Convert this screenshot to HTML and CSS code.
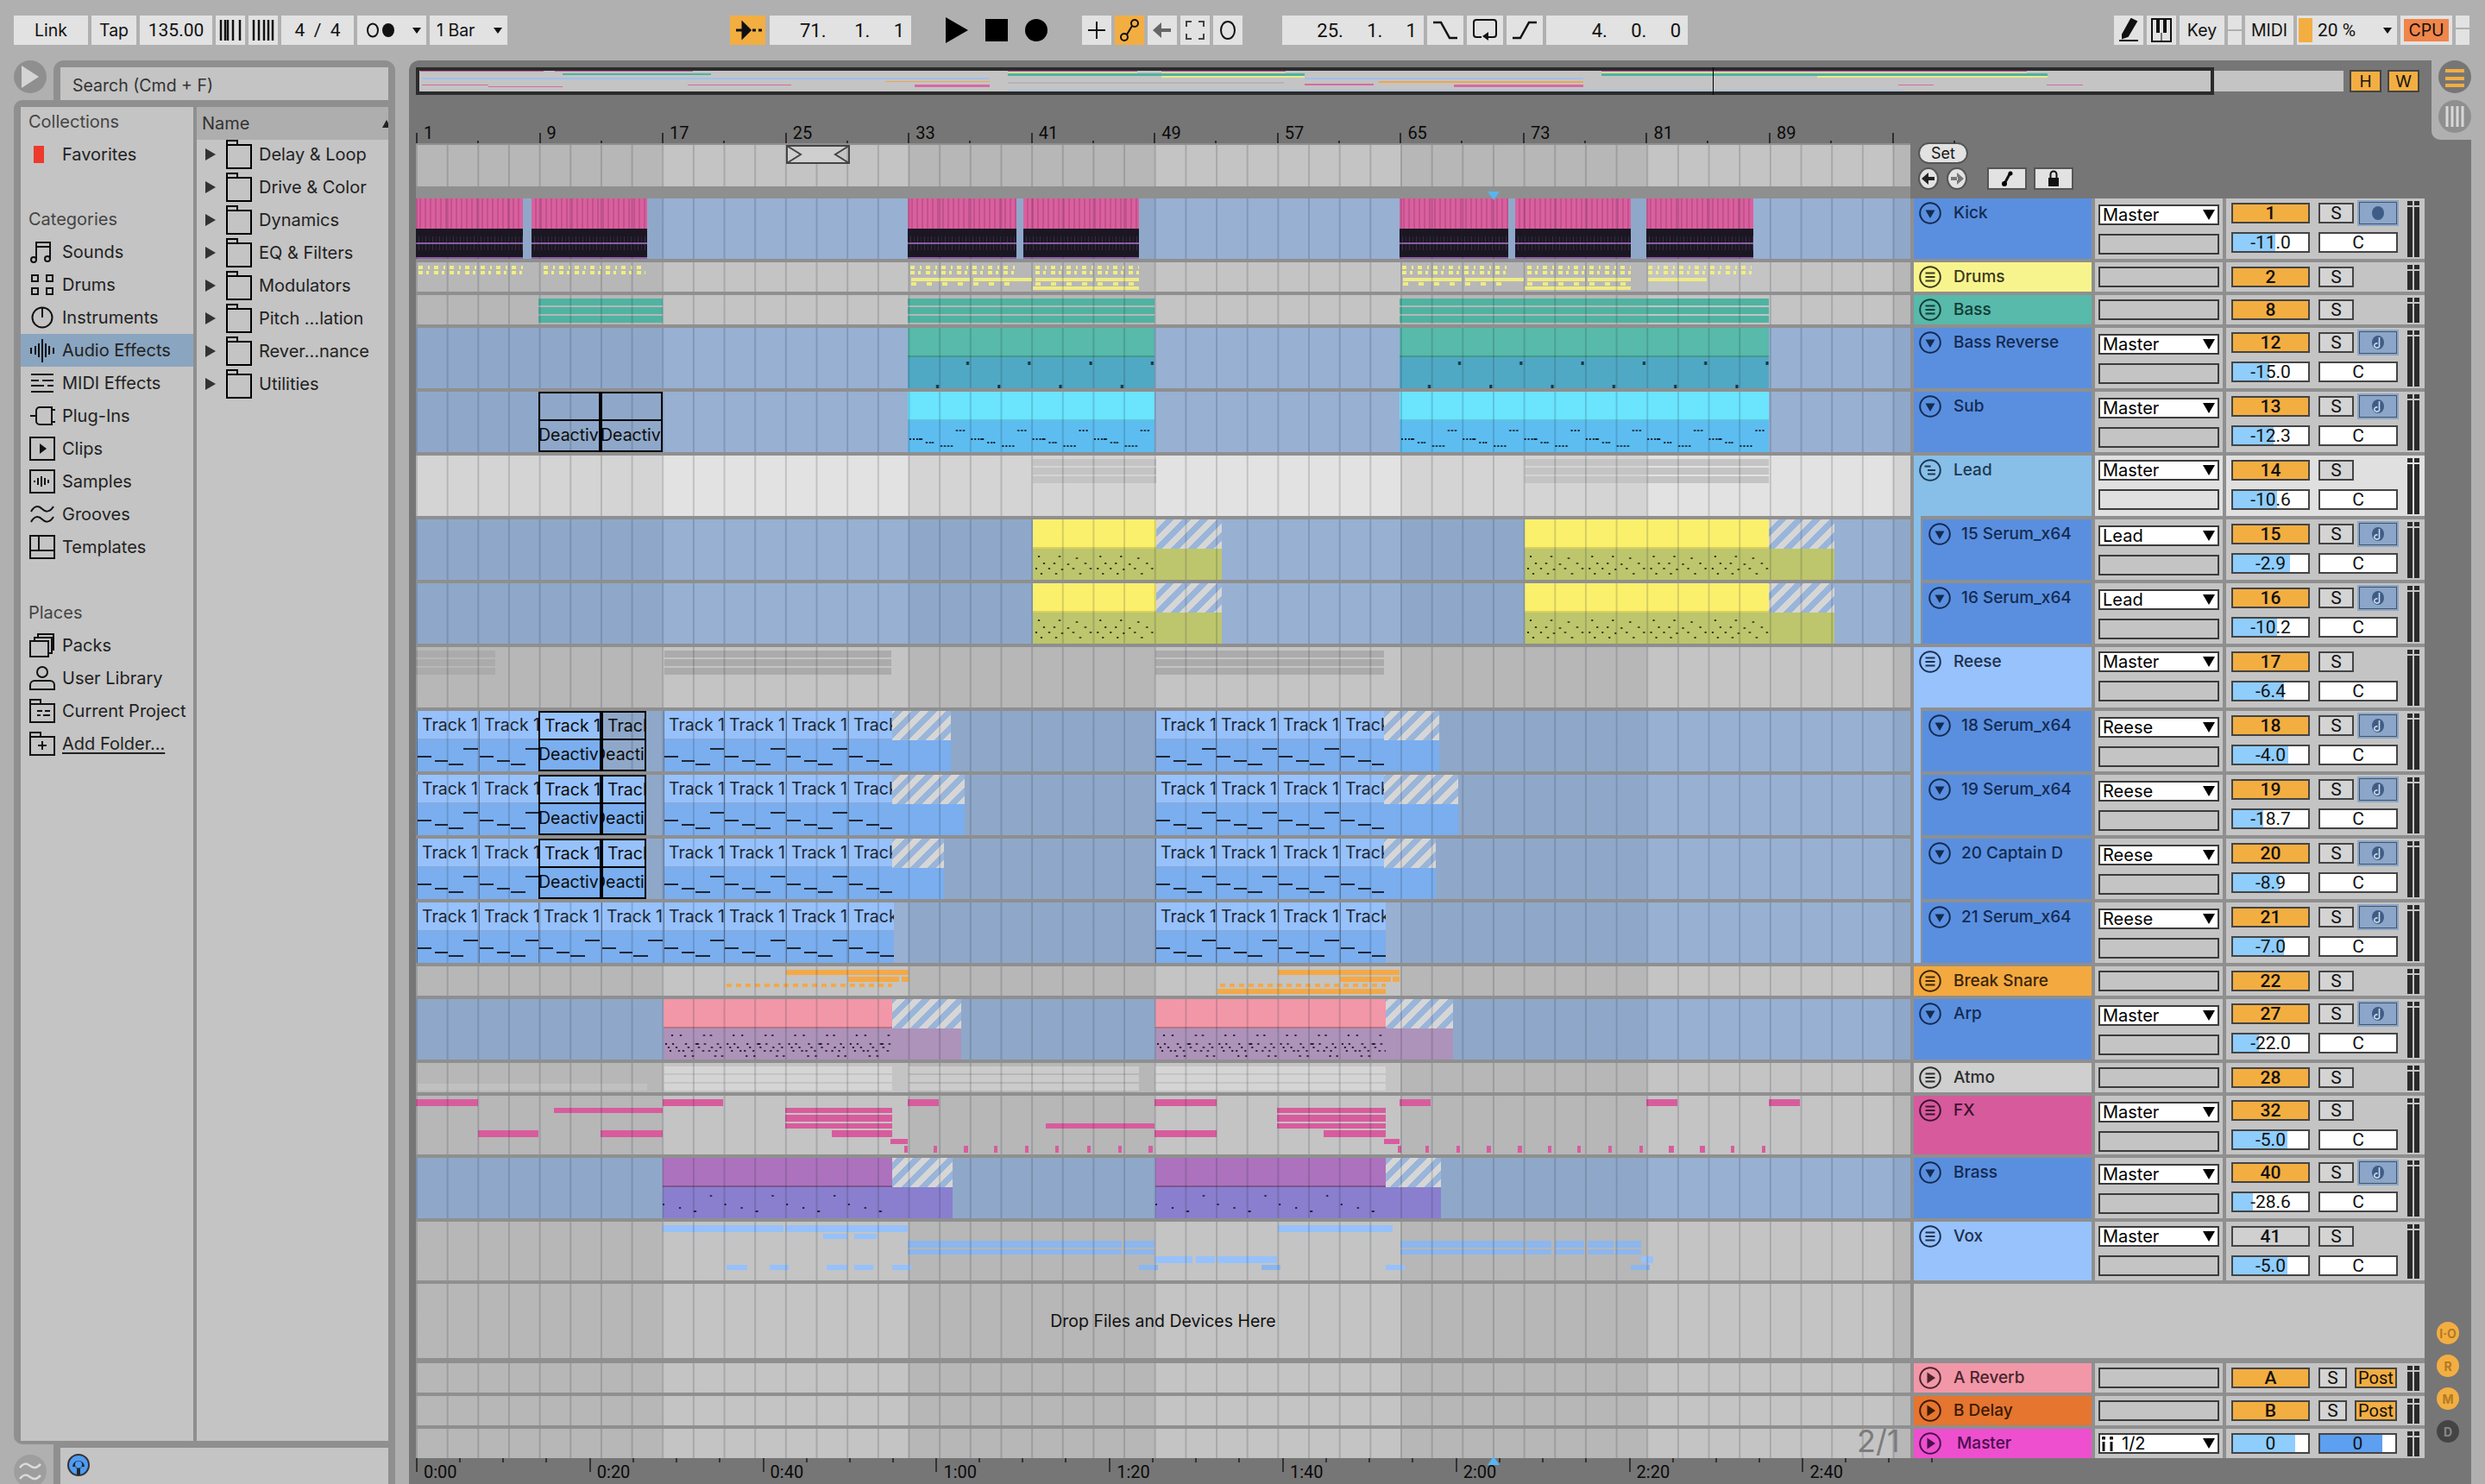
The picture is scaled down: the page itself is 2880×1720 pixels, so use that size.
FILE: index.html
```html
<!DOCTYPE html>
<html lang="en">
<head>
<meta charset="utf-8">
<title>Ableton Live – Arrangement</title>
<link rel="stylesheet" href="styles.css">
</head>
<body>
<svg class="defs" aria-hidden="true">
  <defs>
    <pattern id="p-arp" patternUnits="userSpaceOnUse" width="71.3" height="36">
      <path d="M9 7h2v2H9zM19 7h2v2h-2zM46 7h2v2h-2zM54 7h2v2h-2zM2 17h2v2H2zM10 17h2v2h-2zM25 17h2v2h-2zM37 17h4v2h-4zM47 17h2v2h-2zM62 17h2v2h-2zM5 21h2v2H5zM14 21h2v2h-2zM28 21h2v2h-2zM40 21h2v2h-2zM55 21h2v2h-2zM65 21h2v2h-2zM7 25h2v2H7zM17 25h2v2h-2zM22 25h2v2h-2zM32 25h2v2h-2zM45 25h2v2h-2zM52 25h2v2h-2zM60 25h2v2h-2zM24 31h2v2h-2zM33 31h2v2h-2zM59 31h2v2h-2zM67 31h2v2h-2z" fill="#1f1a28"/>
    </pattern>
    <pattern id="p-lead" patternUnits="userSpaceOnUse" width="71.3" height="36">
      <path d="M6 8h2v2H6zM30 8h2v2h-2zM50 10h2v2h-2zM12 16h2v2h-2zM24 16h2v2h-2zM40 17h2v2h-2zM60 16h2v2h-2zM3 22h2v2H3zM18 22h2v2h-2zM33 23h2v2h-2zM46 22h2v2h-2zM66 22h2v2h-2zM9 28h2v2H9zM26 28h2v2h-2zM54 28h2v2h-2z" fill="#2b2c1a"/>
    </pattern>
    <pattern id="p-brass" patternUnits="userSpaceOnUse" width="71.6" height="36">
      <path d="M55 9h2v2h-2zM0 19h2v2H0zM19 23h2v2h-2zM36 27h3v2h-3z" fill="#1c1a30"/>
    </pattern>
    <pattern id="p-sub" patternUnits="userSpaceOnUse" width="71.3" height="36">
      <path d="M56 10h2v2h-2zM60 10h2v2h-2zM64 10h2v2h-2zM2 20h2v2H2zM6 20h2v2H6zM10 20h2v2h-2zM13 20h4v2h-4zM21 24h2v2h-2zM25 24h2v2h-2zM28 24h2v2h-2zM38 28h2v2h-2zM42 28h2v2h-2zM46 28h2v2h-2zM50 28h2v2h-2z" fill="#10202e"/>
    </pattern>
    <pattern id="p-rev" patternUnits="userSpaceOnUse" width="71.3" height="36">
      <path d="M68 5h3v4h-3zM33 32h3v4h-3z" fill="#12303a"/>
    </pattern>
    <symbol id="t-down" viewBox="0 0 26 26"><circle cx="13" cy="13" r="11.8" fill="none" stroke="currentColor" stroke-width="2"/><path d="M7.5 9.5h11L13 19z" fill="currentColor"/></symbol>
    <symbol id="t-lines" viewBox="0 0 26 26"><circle cx="13" cy="13" r="11.8" fill="none" stroke="currentColor" stroke-width="2"/><path d="M7.5 8.5h11M7.5 13h11M7.5 17.5h11" fill="none" stroke="currentColor" stroke-width="2"/></symbol>
    <symbol id="t-stair" viewBox="0 0 26 26"><circle cx="13" cy="13" r="11.8" fill="none" stroke="currentColor" stroke-width="2"/><path d="M6.5 8.5h7M10 13h9M10 17.5h9" fill="none" stroke="currentColor" stroke-width="2"/></symbol>
    <symbol id="t-right" viewBox="0 0 26 26"><circle cx="13" cy="13" r="11.8" fill="none" stroke="currentColor" stroke-width="2"/><path d="M9.5 6.5 19 13l-9.5 6.5z" fill="currentColor"/></symbol>
    <symbol id="m-dot" viewBox="0 0 20 20"><ellipse cx="10" cy="10" rx="7" ry="8" fill="#3f5c86"/></symbol>
    <symbol id="m-note" viewBox="0 0 20 20"><ellipse cx="10" cy="10" rx="7" ry="8" fill="#3f5c86"/><path d="M11.500 4v8.500a3 2.600 0 1 1-2-1.500" fill="none" stroke="#cfdcee" stroke-width="1.600"/></symbol>
    <symbol id="b-sounds" viewBox="0 0 30 28"><path d="M8 23V3h16v19M8 8h16" fill="none" stroke="#111" stroke-width="2"/><circle cx="5" cy="23" r="3" fill="none" stroke="#111" stroke-width="2"/><circle cx="21" cy="22" r="3" fill="none" stroke="#111" stroke-width="2"/></symbol>
    <symbol id="b-drums" viewBox="0 0 30 28"><path d="M3 3h7v7H3zM20 3h7v7h-7zM3 18h7v7H3zM20 18h7v7h-7z" fill="none" stroke="#111" stroke-width="2"/></symbol>
    <symbol id="b-inst" viewBox="0 0 30 28"><circle cx="15" cy="14" r="11.500" fill="none" stroke="#111" stroke-width="2"/><path d="M15 2v12" stroke="#111" stroke-width="2"/></symbol>
    <symbol id="b-fx" viewBox="0 0 30 28"><path d="M2 11v7M7 9v10M11 6v16M15 1v27M19 6v16M23 9v10M28 11v7" stroke="#111" stroke-width="2"/></symbol>
    <symbol id="b-midi" viewBox="0 0 30 28"><path d="M2 4h26M2 24h26M2 11h9M15 11h13M2 17h15M21 17h7" stroke="#111" stroke-width="2" fill="none"/></symbol>
    <symbol id="b-plug" viewBox="0 0 30 28"><path d="M1 14h7M26 7h4M26 21h4M12 4h14v20H12a4 4 0 0 1-4-4V8a4 4 0 0 1 4-4z" stroke="#111" stroke-width="2" fill="none"/></symbol>
    <symbol id="b-clips" viewBox="0 0 30 28"><path d="M1 1h28v26H1z" stroke="#111" stroke-width="2" fill="none"/><path d="M12 8l8 6-8 6z" fill="#111"/></symbol>
    <symbol id="b-samples" viewBox="0 0 30 28"><path d="M1 1h28v26H1z" stroke="#111" stroke-width="2" fill="none"/><path d="M6 13v2M10 10v8M14 8v12M18 10v8M22 12v4" stroke="#111" stroke-width="2"/></symbol>
    <symbol id="b-grooves" viewBox="0 0 30 28"><path d="M2 11c5-9 10-6 13-3s8 5 13-3M2 23c5-9 10-6 13-3s8 5 13-3" stroke="#111" stroke-width="2" fill="none"/></symbol>
    <symbol id="b-tmpl" viewBox="0 0 30 28"><path d="M1 1h28v26H1zM1 18h28M11 1v17" stroke="#111" stroke-width="2" fill="none"/></symbol>
    <symbol id="b-packs" viewBox="0 0 30 28"><path d="M1 9h21v18H1zM6 9V5h20v18h-4M10 5V1h18v18h-2" stroke="#111" stroke-width="2" fill="none"/></symbol>
    <symbol id="b-user" viewBox="0 0 30 28"><circle cx="15" cy="7" r="6" fill="none" stroke="#111" stroke-width="2"/><path d="M1 27v-5a5 5 0 0 1 5-5h18a5 5 0 0 1 5 5v5z" stroke="#111" stroke-width="2" fill="none"/></symbol>
    <symbol id="b-proj" viewBox="0 0 30 28"><path d="M1 27V1h12v5h16v21zM1 6h12M9 14h6M18 14h6M9 19h4M16 19h8" stroke="#111" stroke-width="2" fill="none"/></symbol>
    <symbol id="b-add" viewBox="0 0 30 28"><path d="M1 27V1h12v5h16v21zM1 6h12M15 11v10M10 16h10" stroke="#111" stroke-width="2" fill="none"/></symbol>
    <symbol id="b-folder" viewBox="0 0 30 34"><path d="M1 33V6h28v27zM1 6V1h12v5" stroke="#000" stroke-width="2" fill="none"/></symbol>
  </defs>
</svg>

<header class="toolbar">
  <div class="tb w86">Link</div>
  <div class="tb w52">Tap</div>
  <div class="tb w84 dg">135.00</div>
  <div class="tb w34"><svg width="26" height="28"><path d="M2 2v24M7 2v24M10 2v24M16 2v24M24 2v24" stroke="#111" stroke-width="2.500"/></svg></div>
  <div class="tb w34"><svg width="26" height="28"><path d="M2 2v24M8 2v24M14 2v24M19 2v24M24 2v24" stroke="#111" stroke-width="2.500"/></svg></div>
  <div class="tb w84 dg">4 &nbsp;/&nbsp; 4</div>
  <div class="tb w80 drop"><svg width="40" height="28"><ellipse cx="10" cy="14" rx="6" ry="7.500" fill="none" stroke="#111" stroke-width="2"/><ellipse cx="28" cy="14" rx="7" ry="8" fill="#111"/></svg><i class="tri-d"></i></div>
  <div class="tb w90 drop">1 Bar<i class="tri-d"></i></div>
  <div class="tb w41 on sp-a"><svg width="32" height="24"><path d="M2 12h12M10 4l8 8-8 8zM21 12h4M28 12h4" stroke="#111" stroke-width="3" fill="#111"/></svg></div>
  <div class="tb w164 num-r sp-b">71.&nbsp;&nbsp;&nbsp;&nbsp;&nbsp;&nbsp;1.&nbsp;&nbsp;&nbsp;&nbsp;&nbsp;1</div>
  <div class="transport">
    <svg width="26" height="30"><path d="M0 0l26 15L0 30z" fill="#000"/></svg>
    <svg width="26" height="26"><path d="M0 0h26v26H0z" fill="#000"/></svg>
    <svg width="26" height="26"><ellipse cx="13" cy="13" rx="13" ry="13" fill="#000"/></svg>
  </div>
  <div class="tb w34"><svg width="22" height="24"><path d="M11 2v20M1 12h20" stroke="#111" stroke-width="2"/></svg></div>
  <div class="tb w34 on"><svg width="24" height="28"><circle cx="6" cy="22" r="4" fill="none" stroke="#111" stroke-width="2"/><circle cx="18" cy="6" r="4" fill="none" stroke="#111" stroke-width="2"/><path d="M9 19l6-10" stroke="#111" stroke-width="2"/></svg></div>
  <div class="tb w34"><svg width="22" height="20"><path d="M10 1v18L0 10zM8 8h13v4H8z" fill="#666"/></svg></div>
  <div class="tb w34"><svg width="22" height="22"><path d="M1 7V1h6M15 1h6v6M21 15v6h-6M7 21H1v-6" fill="none" stroke="#444" stroke-width="2"/></svg></div>
  <div class="tb w34"><svg width="20" height="24"><ellipse cx="10" cy="12" rx="8" ry="10" fill="none" stroke="#111" stroke-width="2"/></svg></div>
  <div class="tb w164 num-r sp-c">25.&nbsp;&nbsp;&nbsp;&nbsp;&nbsp;1.&nbsp;&nbsp;&nbsp;&nbsp;&nbsp;1</div>
  <div class="tb w42"><svg width="28" height="22"><path d="M0 2h9l10 18h9" fill="none" stroke="#111" stroke-width="2.500"/></svg></div>
  <div class="tb w42"><svg width="28" height="28"><path d="M10 22H4a3 3 0 0 1-3-3V5a3 3 0 0 1 3-3h20a3 3 0 0 1 3 3v14a3 3 0 0 1-3 3h-6" fill="none" stroke="#111" stroke-width="2"/><path d="M18 16v10l-7-5z" fill="#111"/></svg></div>
  <div class="tb w42"><svg width="28" height="22"><path d="M0 20h9L19 2h9" fill="none" stroke="#111" stroke-width="2.500"/></svg></div>
  <div class="tb w164 num-r">4.&nbsp;&nbsp;&nbsp;&nbsp;&nbsp;0.&nbsp;&nbsp;&nbsp;&nbsp;&nbsp;0</div>
  <div class="tb w34 sp-d"><svg width="24" height="28"><path d="M5 19 15 1l6 3-10 17-6 2zM1 26h22" fill="#111" stroke="#111" stroke-width="2"/></svg></div>
  <div class="tb w34"><svg width="24" height="28"><path d="M1 1h22v26H1z" fill="none" stroke="#111" stroke-width="2"/><path d="M6 1h4v16H6zM14 1h4v16h-4z" fill="#111"/><path d="M12 17v10" stroke="#111"/></svg></div>
  <div class="tb w52">Key</div>
  <div class="split"><i></i><i></i></div>
  <div class="tb w56">MIDI</div>
  <div class="tb w116 cpu dg"><i class="cpu-fill"></i><span>20 %</span><i class="tri-d"></i></div>
  <div class="tb w60 cpuwarn"><span>CPU</span></div>
  <div class="split small"><i></i><i></i></div>
</header>

<main class="main">
  <aside class="browser">
    <div class="toggle"><svg width="24" height="30"><path d="M2 2l20 13L2 28z" fill="#d4d4d4"/></svg></div>
    <div class="srchwrap"><div class="search">Search (Cmd + F)</div></div>
    <div class="bbody">
      <nav class="col-left">
        <div class="hd first">Collections</div>
        <div class="item"><i class="fav"></i><span>Favorites</span></div>
        <div class="hd">Categories</div>
        <div class="item"><svg class="bi"><use href="#b-sounds"/></svg><span>Sounds</span></div>
        <div class="item"><svg class="bi"><use href="#b-drums"/></svg><span>Drums</span></div>
        <div class="item"><svg class="bi"><use href="#b-inst"/></svg><span>Instruments</span></div>
        <div class="item sel-item"><svg class="bi"><use href="#b-fx"/></svg><span>Audio Effects</span></div>
        <div class="item"><svg class="bi"><use href="#b-midi"/></svg><span>MIDI Effects</span></div>
        <div class="item"><svg class="bi"><use href="#b-plug"/></svg><span>Plug-Ins</span></div>
        <div class="item"><svg class="bi"><use href="#b-clips"/></svg><span>Clips</span></div>
        <div class="item"><svg class="bi"><use href="#b-samples"/></svg><span>Samples</span></div>
        <div class="item"><svg class="bi"><use href="#b-grooves"/></svg><span>Grooves</span></div>
        <div class="item"><svg class="bi"><use href="#b-tmpl"/></svg><span>Templates</span></div>
        <div class="hd places">Places</div>
        <div class="item"><svg class="bi"><use href="#b-packs"/></svg><span>Packs</span></div>
        <div class="item"><svg class="bi"><use href="#b-user"/></svg><span>User Library</span></div>
        <div class="item"><svg class="bi"><use href="#b-proj"/></svg><span class="clipped">Current Project</span></div>
        <div class="item"><svg class="bi"><use href="#b-add"/></svg><span class="link">Add Folder...</span></div>
      </nav>
      <section class="col-right">
        <div class="namehd">Name<i class="sort"></i></div>
        <div class="row"><i class="arr-r"></i><svg class="fo"><use href="#b-folder"/></svg><span>Delay &amp; Loop</span></div>
        <div class="row"><i class="arr-r"></i><svg class="fo"><use href="#b-folder"/></svg><span>Drive &amp; Color</span></div>
        <div class="row"><i class="arr-r"></i><svg class="fo"><use href="#b-folder"/></svg><span>Dynamics</span></div>
        <div class="row"><i class="arr-r"></i><svg class="fo"><use href="#b-folder"/></svg><span>EQ &amp; Filters</span></div>
        <div class="row"><i class="arr-r"></i><svg class="fo"><use href="#b-folder"/></svg><span>Modulators</span></div>
        <div class="row"><i class="arr-r"></i><svg class="fo"><use href="#b-folder"/></svg><span>Pitch ...lation</span></div>
        <div class="row"><i class="arr-r"></i><svg class="fo"><use href="#b-folder"/></svg><span>Rever...nance</span></div>
        <div class="row"><i class="arr-r"></i><svg class="fo"><use href="#b-folder"/></svg><span>Utilities</span></div>
      </section>
    </div>
    <div class="groove"><svg width="30" height="30"><path d="M3 11c5-6 8-5 12-2s7 3 12-2M3 24c5-6 8-5 12-2s7 3 12-2" fill="none" stroke="#dcdcdc" stroke-width="2.500"/></svg></div>
    <div class="bbar"><div class="bbar-in"><svg width="26" height="26"><ellipse cx="13" cy="13" rx="12" ry="12" fill="#4f9cf2" stroke="#333" stroke-width="2"/><path d="M6 15a7 7 0 1 1 14 0h-3l-2 2v7h-4v-7l-2-2z" fill="#23272e"/><circle cx="13" cy="12.500" r="4" fill="#4f9cf2"/></svg></div></div>
  </aside>

  <section class="arr">
    <div class="ovrow">
      <div class="ov">
        <i class="mb" style="left:1px;top:0;width:143px;height:1px;background:#c75d9b"></i>
        <i class="mb" style="left:157px;top:0;width:160px;height:1px;background:#c75d9b"></i>
        <i class="mb" style="left:682px;top:0;width:150px;height:1px;background:#c75d9b"></i>
        <i class="mb" style="left:860px;top:0;width:144px;height:1px;background:#c75d9b"></i>
        <i class="mb" style="left:1370px;top:0;width:493px;height:1px;background:#c75d9b"></i>
        <i class="mb" style="left:682px;top:2px;width:150px;height:1px;background:#ece98a"></i>
        <i class="mb" style="left:860px;top:2px;width:144px;height:2px;background:#ece98a"></i>
        <i class="mb" style="left:1370px;top:2px;width:493px;height:1px;background:#ece98a"></i>
        <i class="mb" style="left:166px;top:3px;width:172px;height:2px;background:#4fb3a1"></i>
        <i class="mb" style="left:682px;top:3px;width:344px;height:3px;background:#4fb3a1"></i>
        <i class="mb" style="left:1370px;top:3px;width:517px;height:3px;background:#4fb3a1"></i>
        <i class="mb" style="left:860px;top:6px;width:166px;height:2px;background:#ece98a"></i>
        <i class="mb" style="left:1620px;top:6px;width:267px;height:2px;background:#ece98a"></i>
        <i class="mb" style="left:3px;top:8px;width:658px;height:2px;background:#9fc0ee"></i>
        <i class="mb" style="left:1026px;top:8px;width:323px;height:2px;background:#9fc0ee"></i>
        <i class="mb" style="left:540px;top:12px;width:121px;height:1px;background:#f1a64a"></i>
        <i class="mb" style="left:1112px;top:12px;width:237px;height:2px;background:#f1a64a"></i>
        <i class="mb" style="left:3px;top:16px;width:77px;height:1px;background:#d66aa4"></i>
        <i class="mb" style="left:80px;top:18px;width:86px;height:1px;background:#d66aa4"></i>
        <i class="mb" style="left:311px;top:16px;width:120px;height:1px;background:#d66aa4"></i>
        <i class="mb" style="left:574px;top:16px;width:87px;height:3px;background:#d66aa4"></i>
        <i class="mb" style="left:1026px;top:15px;width:80px;height:2px;background:#d66aa4"></i>
        <i class="mb" style="left:1199px;top:16px;width:150px;height:3px;background:#d66aa4"></i>
        <i class="mb" style="left:1714px;top:16px;width:41px;height:1px;background:#d66aa4"></i>
        <i class="mb" style="left:1886px;top:16px;width:42px;height:1px;background:#d66aa4"></i>
        <i class="mb" style="left:682px;top:13px;width:320px;height:2px;background:#b4b4b4"></i>
        <i class="mb" style="left:682px;top:22px;width:1037px;height:1px;background:#9fc0ee"></i>
        <i class="mb" style="left:1499px;top:-4px;width:1px;height:32px;background:#000"></i>
      </div>
      <div class="ovrest"></div>
      <div class="hw">H</div>
      <div class="hw">W</div>
    </div>

    <div class="ruler">
      <div class="rb">1</div><div class="rb">9</div><div class="rb">17</div><div class="rb">25</div><div class="rb">33</div><div class="rb">41</div><div class="rb">49</div><div class="rb">57</div><div class="rb">65</div><div class="rb">73</div><div class="rb">81</div><div class="rb">89</div><div class="rb"></div>
    </div>

    <div class="striprow">
      <div class="stripwrap">
        <div class="lane gray strip">
          <div class="loc" style="left:429px;width:74px"><svg width="74" height="22"><path d="M1 1h72v20H1zM1 1l16 10L1 21M73 1 57 11l16 10" fill="#cfcfcf" stroke="#444" stroke-width="2"/></svg></div>
        </div>
      </div>
      <div class="setctl">
        <div class="setbtn">Set</div>
        <div class="setrow">
          <div class="rnd"><svg width="16" height="16"><path d="M8 1v14L0 8zM7 6h8v4H7z" fill="#222"/></svg></div>
          <div class="rnd"><svg width="16" height="16"><path d="M8 1v14l8-7zM1 6h8v4H1z" fill="#777"/></svg></div>
          <div class="sq first"><svg width="18" height="20"><path d="M13 3 6 16" stroke="#111" stroke-width="3"/><circle cx="13" cy="4" r="2.500"/><circle cx="6" cy="16" r="3"/></svg></div>
          <div class="sq"><svg width="16" height="20"><path d="M2 9h12v10H2z" fill="#111"/><path d="M4.500 9V5a3.500 3.500 0 0 1 7 0v4" fill="none" stroke="#111" stroke-width="2"/></svg></div>
        </div>
      </div>
    </div>

    <div class="tracks">

      <!-- Kick -->
      <div class="track h70">
        <div class="lane blue">
          <div class="kick" style="left:0;width:124px"></div><div class="kick" style="left:134px;width:134px"></div>
          <div class="kick" style="left:570px;width:126px"></div><div class="kick" style="left:704px;width:134px"></div>
          <div class="kick" style="left:1140px;width:126px"></div><div class="kick" style="left:1274px;width:134px"></div><div class="kick" style="left:1426px;width:124px"></div>
        </div>
        <div class="name t-blue"><svg class="ti"><use href="#t-down"/></svg><span>Kick</span></div>
        <div class="mid"><div class="sel">Master</div><div class="box"></div></div>
        <div class="ctl"><div class="num">1</div><div class="s">S</div><div class="mon"><svg width="20" height="20"><use href="#m-dot"/></svg></div><div class="vol" style="--v:56%">-11.0</div><div class="c">C</div><div class="meter"></div></div>
      </div>

      <!-- Drums -->
      <div class="track h34">
        <div class="lane gray">
          <div class="dots" style="left:3px;width:123px"></div><div class="dots" style="left:148px;width:118px"></div>
          <div class="dots" style="left:573px;width:123px"></div><div class="dots" style="left:718px;width:120px"></div>
          <i class="bar dr" style="left:574px;top:18px;width:68px;height:4px"></i><i class="bar dr" style="left:646px;top:18px;width:68px;height:4px"></i><i class="bar dr" style="left:718px;top:18px;width:67px;height:4px"></i><i class="bar dr" style="left:788px;top:18px;width:50px;height:4px"></i>
          <i class="bar drd" style="left:574px;top:23px;width:126px;height:4px"></i><i class="bar drd" style="left:718px;top:23px;width:120px;height:4px"></i><i class="bar dr" style="left:715px;top:28px;width:123px;height:4px"></i>
          <div class="dots" style="left:1143px;width:123px"></div><div class="dots" style="left:1288px;width:120px"></div><div class="dots" style="left:1428px;width:120px"></div>
          <i class="bar dr" style="left:1144px;top:18px;width:68px;height:4px"></i><i class="bar dr" style="left:1216px;top:18px;width:68px;height:4px"></i><i class="bar dr" style="left:1288px;top:18px;width:67px;height:4px"></i><i class="bar dr" style="left:1358px;top:18px;width:50px;height:4px"></i><i class="bar dr" style="left:1428px;top:18px;width:68px;height:4px"></i>
          <i class="bar drd" style="left:1144px;top:23px;width:126px;height:4px"></i><i class="bar drd" style="left:1288px;top:23px;width:120px;height:4px"></i><i class="bar dr" style="left:1285px;top:28px;width:123px;height:4px"></i>
        </div>
        <div class="name t-yellow"><svg class="ti"><use href="#t-lines"/></svg><span>Drums</span></div>
        <div class="mid sm"><div class="box"></div></div>
        <div class="ctl"><div class="num">2</div><div class="s">S</div><div class="meter"></div></div>
      </div>

      <!-- Bass -->
      <div class="track h34">
        <div class="lane gray">
          <div class="tri teal" style="left:142px;width:144px"></div><div class="tri teal" style="left:570px;width:286px"></div><div class="tri teal" style="left:1140px;width:428px"></div>
        </div>
        <div class="name t-teal"><svg class="ti"><use href="#t-lines"/></svg><span>Bass</span></div>
        <div class="mid sm"><div class="box"></div></div>
        <div class="ctl"><div class="num">8</div><div class="s">S</div><div class="meter"></div></div>
      </div>

      <!-- Bass Reverse -->
      <div class="track h70">
        <div class="lane blue">
          <div class="clip c-rev" style="left:570px;width:286px"><div class="h"></div><div class="b"><svg class="n"><rect width="100%" height="100%" fill="url(#p-rev)"/></svg></div></div>
          <div class="clip c-rev" style="left:1140px;width:428px"><div class="h"></div><div class="b"><svg class="n"><rect width="100%" height="100%" fill="url(#p-rev)"/></svg></div></div>
        </div>
        <div class="name t-blue"><svg class="ti"><use href="#t-down"/></svg><span>Bass Reverse</span></div>
        <div class="mid"><div class="sel">Master</div><div class="box"></div></div>
        <div class="ctl"><div class="num">12</div><div class="s">S</div><div class="mon"><svg width="20" height="20"><use href="#m-note"/></svg></div><div class="vol" style="--v:48%">-15.0</div><div class="c">C</div><div class="meter"></div></div>
      </div>

      <!-- Sub -->
      <div class="track h70">
        <div class="lane blue">
          <div class="mc off clear" style="left:142px;width:72px"><b></b><i>Deactiv</i></div>
          <div class="mc off clear" style="left:214px;width:72px"><b></b><i>Deactiv</i></div>
          <div class="clip c-sub" style="left:570px;width:286px"><div class="h"></div><div class="b"><svg class="n"><rect width="100%" height="100%" fill="url(#p-sub)"/></svg></div></div>
          <div class="clip c-sub" style="left:1140px;width:428px"><div class="h"></div><div class="b"><svg class="n"><rect width="100%" height="100%" fill="url(#p-sub)"/></svg></div></div>
        </div>
        <div class="name t-blue"><svg class="ti"><use href="#t-down"/></svg><span>Sub</span></div>
        <div class="mid"><div class="sel">Master</div><div class="box"></div></div>
        <div class="ctl"><div class="num">13</div><div class="s">S</div><div class="mon"><svg width="20" height="20"><use href="#m-note"/></svg></div><div class="vol" style="--v:54%">-12.3</div><div class="c">C</div><div class="meter"></div></div>
      </div>

      <!-- Lead -->
      <div class="track h70 hot">
        <div class="lane light">
          <div class="tri grey" style="left:715px;width:143px"></div><div class="tri grey" style="left:1285px;width:283px"></div>
        </div>
        <div class="name t-lead"><svg class="ti"><use href="#t-stair"/></svg><span>Lead</span></div>
        <div class="mid grp"><div class="sel">Master</div><div class="box"></div></div>
        <div class="ctl"><div class="num">14</div><div class="s">S</div><div class="vol" style="--v:59%">-10.6</div><div class="c">C</div><div class="meter"></div></div>
      </div>

      <!-- 15 -->
      <div class="track h70">
        <div class="lane blue">
          <div class="clip c-lead" style="left:715px;width:143px"><div class="h"></div><div class="b"><svg class="n"><rect width="100%" height="100%" fill="url(#p-lead)"/></svg></div></div>
          <div class="clip c-lead" style="left:858px;width:76px"><div class="h hatch"></div><div class="b"></div></div>
          <div class="clip c-lead" style="left:1285px;width:283px"><div class="h"></div><div class="b"><svg class="n"><rect width="100%" height="100%" fill="url(#p-lead)"/></svg></div></div>
          <div class="clip c-lead" style="left:1568px;width:76px"><div class="h hatch"></div><div class="b"></div></div>
        </div>
        <div class="name nest g-lead"><div class="inner t-blue"><svg class="ti"><use href="#t-down"/></svg><span>15 Serum_x64</span></div></div>
        <div class="mid"><div class="sel">Lead</div><div class="box"></div></div>
        <div class="ctl"><div class="num">15</div><div class="s">S</div><div class="mon"><svg width="20" height="20"><use href="#m-note"/></svg></div><div class="vol" style="--v:76%">-2.9</div><div class="c">C</div><div class="meter"></div></div>
      </div>

      <!-- 16 -->
      <div class="track h70">
        <div class="lane blue">
          <div class="clip c-lead" style="left:715px;width:143px"><div class="h"></div><div class="b"><svg class="n"><rect width="100%" height="100%" fill="url(#p-lead)"/></svg></div></div>
          <div class="clip c-lead" style="left:858px;width:76px"><div class="h hatch"></div><div class="b"></div></div>
          <div class="clip c-lead" style="left:1285px;width:283px"><div class="h"></div><div class="b"><svg class="n"><rect width="100%" height="100%" fill="url(#p-lead)"/></svg></div></div>
          <div class="clip c-lead" style="left:1568px;width:76px"><div class="h hatch"></div><div class="b"></div></div>
        </div>
        <div class="name nest g-lead"><div class="inner t-blue"><svg class="ti"><use href="#t-down"/></svg><span>16 Serum_x64</span></div></div>
        <div class="mid"><div class="sel">Lead</div><div class="box"></div></div>
        <div class="ctl"><div class="num">16</div><div class="s">S</div><div class="mon"><svg width="20" height="20"><use href="#m-note"/></svg></div><div class="vol" style="--v:59%">-10.2</div><div class="c">C</div><div class="meter"></div></div>
      </div>

      <!-- Reese -->
      <div class="track h70">
        <div class="lane gray">
          <div class="tri grey2" style="left:0;width:92px"></div><div class="tri grey2" style="left:288px;width:263px"></div><div class="tri grey2" style="left:857px;width:265px"></div>
        </div>
        <div class="name t-reese"><svg class="ti"><use href="#t-lines"/></svg><span>Reese</span></div>
        <div class="mid grp"><div class="sel">Master</div><div class="box"></div></div>
        <div class="ctl"><div class="num">17</div><div class="s">S</div><div class="vol" style="--v:68%">-6.4</div><div class="c">C</div><div class="meter"></div></div>
      </div>

      <!-- 18 -->
      <div class="track h70">
        <div class="lane blue">
          <div class="mc" style="left:1px;width:72px"><b>Track 1</b><i></i></div><div class="mc" style="left:73px;width:69px"><b>Track 1</b><i></i></div>
          <div class="mc off" style="left:142px;width:73px"><b>Track 1</b><i>Deactiv</i></div><div class="mc off clear short" style="left:215px;width:52px"><b>Track 1</b><i>Deactiv</i></div>
          <div class="mc" style="left:287px;width:70px"><b>Track 1</b><i></i></div><div class="mc" style="left:357px;width:72px"><b>Track 1</b><i></i></div><div class="mc" style="left:429px;width:72px"><b>Track 1</b><i></i></div><div class="mc" style="left:501px;width:51px"><b>Track 1</b><i></i></div>
          <div class="clip c-mid" style="left:552px;width:68px"><div class="h hatch"></div><div class="b"></div></div>
          <div class="mc" style="left:857px;width:70px"><b>Track 1</b><i></i></div><div class="mc" style="left:927px;width:72px"><b>Track 1</b><i></i></div><div class="mc" style="left:999px;width:72px"><b>Track 1</b><i></i></div><div class="mc" style="left:1071px;width:51px"><b>Track 1</b><i></i></div>
          <div class="clip c-mid" style="left:1122px;width:64px"><div class="h hatch"></div><div class="b"></div></div>
        </div>
        <div class="name nest g-reese"><div class="inner t-blue"><svg class="ti"><use href="#t-down"/></svg><span>18 Serum_x64</span></div></div>
        <div class="mid"><div class="sel">Reese</div><div class="box"></div></div>
        <div class="ctl"><div class="num">18</div><div class="s">S</div><div class="mon"><svg width="20" height="20"><use href="#m-note"/></svg></div><div class="vol" style="--v:74%">-4.0</div><div class="c">C</div><div class="meter"></div></div>
      </div>

      <!-- 19 -->
      <div class="track h70">
        <div class="lane blue">
          <div class="mc" style="left:1px;width:72px"><b>Track 1</b><i></i></div><div class="mc" style="left:73px;width:69px"><b>Track 1</b><i></i></div>
          <div class="mc off" style="left:142px;width:73px"><b>Track 1</b><i>Deactiv</i></div><div class="mc off short" style="left:215px;width:52px"><b>Track 1</b><i>Deactiv</i></div>
          <div class="mc" style="left:287px;width:70px"><b>Track 1</b><i></i></div><div class="mc" style="left:357px;width:72px"><b>Track 1</b><i></i></div><div class="mc" style="left:429px;width:72px"><b>Track 1</b><i></i></div><div class="mc" style="left:501px;width:51px"><b>Track 1</b><i></i></div>
          <div class="clip c-mid" style="left:552px;width:84px"><div class="h hatch"></div><div class="b"></div></div>
          <div class="mc" style="left:857px;width:70px"><b>Track 1</b><i></i></div><div class="mc" style="left:927px;width:72px"><b>Track 1</b><i></i></div><div class="mc" style="left:999px;width:72px"><b>Track 1</b><i></i></div><div class="mc" style="left:1071px;width:51px"><b>Track 1</b><i></i></div>
          <div class="clip c-mid" style="left:1122px;width:86px"><div class="h hatch"></div><div class="b"></div></div>
        </div>
        <div class="name nest g-reese"><div class="inner t-blue"><svg class="ti"><use href="#t-down"/></svg><span>19 Serum_x64</span></div></div>
        <div class="mid"><div class="sel">Reese</div><div class="box"></div></div>
        <div class="ctl"><div class="num">19</div><div class="s">S</div><div class="mon"><svg width="20" height="20"><use href="#m-note"/></svg></div><div class="vol" style="--v:40%">-18.7</div><div class="c">C</div><div class="meter"></div></div>
      </div>

      <!-- 20 -->
      <div class="track h70">
        <div class="lane blue">
          <div class="mc" style="left:1px;width:72px"><b>Track 1</b><i></i></div><div class="mc" style="left:73px;width:69px"><b>Track 1</b><i></i></div>
          <div class="mc off" style="left:142px;width:73px"><b>Track 1</b><i>Deactiv</i></div><div class="mc off short" style="left:215px;width:52px"><b>Track 1</b><i>Deactiv</i></div>
          <div class="mc" style="left:287px;width:70px"><b>Track 1</b><i></i></div><div class="mc" style="left:357px;width:72px"><b>Track 1</b><i></i></div><div class="mc" style="left:429px;width:72px"><b>Track 1</b><i></i></div><div class="mc" style="left:501px;width:51px"><b>Track 1</b><i></i></div>
          <div class="clip c-mid" style="left:552px;width:60px"><div class="h hatch"></div><div class="b"></div></div>
          <div class="mc" style="left:857px;width:70px"><b>Track 1</b><i></i></div><div class="mc" style="left:927px;width:72px"><b>Track 1</b><i></i></div><div class="mc" style="left:999px;width:72px"><b>Track 1</b><i></i></div><div class="mc" style="left:1071px;width:51px"><b>Track 1</b><i></i></div>
          <div class="clip c-mid" style="left:1122px;width:60px"><div class="h hatch"></div><div class="b"></div></div>
        </div>
        <div class="name nest g-reese"><div class="inner t-blue"><svg class="ti"><use href="#t-down"/></svg><span>20 Captain D</span></div></div>
        <div class="mid"><div class="sel">Reese</div><div class="box"></div></div>
        <div class="ctl"><div class="num">20</div><div class="s">S</div><div class="mon"><svg width="20" height="20"><use href="#m-note"/></svg></div><div class="vol" style="--v:62%">-8.9</div><div class="c">C</div><div class="meter"></div></div>
      </div>

      <!-- 21 -->
      <div class="track h70">
        <div class="lane blue">
          <div class="mc" style="left:1px;width:72px"><b>Track 1</b><i></i></div><div class="mc" style="left:73px;width:69px"><b>Track 1</b><i></i></div><div class="mc" style="left:142px;width:73px"><b>Track 1</b><i></i></div><div class="mc" style="left:215px;width:72px"><b>Track 1</b><i></i></div>
          <div class="mc" style="left:287px;width:70px"><b>Track 1</b><i></i></div><div class="mc" style="left:357px;width:72px"><b>Track 1</b><i></i></div><div class="mc" style="left:429px;width:72px"><b>Track 1</b><i></i></div><div class="mc" style="left:501px;width:53px"><b>Track 1</b><i></i></div>
          <div class="mc" style="left:857px;width:70px"><b>Track 1</b><i></i></div><div class="mc" style="left:927px;width:72px"><b>Track 1</b><i></i></div><div class="mc" style="left:999px;width:72px"><b>Track 1</b><i></i></div><div class="mc" style="left:1071px;width:53px"><b>Track 1</b><i></i></div>
        </div>
        <div class="name nest g-reese"><div class="inner t-blue"><svg class="ti"><use href="#t-down"/></svg><span>21 Serum_x64</span></div></div>
        <div class="mid"><div class="sel">Reese</div><div class="box"></div></div>
        <div class="ctl"><div class="num">21</div><div class="s">S</div><div class="mon"><svg width="20" height="20"><use href="#m-note"/></svg></div><div class="vol" style="--v:68%">-7.0</div><div class="c">C</div><div class="meter"></div></div>
      </div>

      <!-- Break Snare -->
      <div class="track h34">
        <div class="lane gray">
          <i class="bar or" style="left:429px;top:4px;width:142px;height:6px"></i><i class="bar or" style="left:501px;top:12px;width:59px;height:6px"></i><i class="bar or" style="left:563px;top:12px;width:8px;height:6px"></i><i class="bar ord" style="left:360px;top:20px;width:192px;height:4px"></i>
          <i class="bar or" style="left:999px;top:4px;width:141px;height:6px"></i><i class="bar or" style="left:1071px;top:12px;width:59px;height:6px"></i><i class="bar or" style="left:1132px;top:12px;width:8px;height:6px"></i><i class="bar ord" style="left:932px;top:20px;width:192px;height:4px"></i><i class="bar or" style="left:929px;top:26px;width:195px;height:6px"></i>
        </div>
        <div class="name t-orange"><svg class="ti"><use href="#t-lines"/></svg><span>Break Snare</span></div>
        <div class="mid sm"><div class="box"></div></div>
        <div class="ctl"><div class="num">22</div><div class="s">S</div><div class="meter"></div></div>
      </div>

      <!-- Arp -->
      <div class="track h70">
        <div class="lane blue">
          <div class="clip c-arp" style="left:287px;width:265px"><div class="h"></div><div class="b"><svg class="n"><rect width="100%" height="100%" fill="url(#p-arp)"/></svg></div></div>
          <div class="clip c-arp" style="left:552px;width:80px"><div class="h hatch"></div><div class="b"></div></div>
          <div class="clip c-arp" style="left:857px;width:267px"><div class="h"></div><div class="b"><svg class="n"><rect width="100%" height="100%" fill="url(#p-arp)"/></svg></div></div>
          <div class="clip c-arp" style="left:1124px;width:78px"><div class="h hatch"></div><div class="b"></div></div>
        </div>
        <div class="name t-blue"><svg class="ti"><use href="#t-down"/></svg><span>Arp</span></div>
        <div class="mid"><div class="sel">Master</div><div class="box"></div></div>
        <div class="ctl"><div class="num">27</div><div class="s">S</div><div class="mon"><svg width="20" height="20"><use href="#m-note"/></svg></div><div class="vol" style="--v:34%">-22.0</div><div class="c">C</div><div class="meter"></div></div>
      </div>

      <!-- Atmo -->
      <div class="track h34">
        <div class="lane gray">
          <div class="tri faint" style="left:2px;width:266px"></div>
          <div class="tri atm" style="left:288px;width:264px"></div><div class="tri atm2" style="left:571px;width:267px"></div><div class="tri atm" style="left:857px;width:267px"></div>
        </div>
        <div class="name t-atmo"><svg class="ti"><use href="#t-lines"/></svg><span>Atmo</span></div>
        <div class="mid sm"><div class="box"></div></div>
        <div class="ctl"><div class="num">28</div><div class="s">S</div><div class="meter"></div></div>
      </div>

      <!-- FX -->
      <div class="track h68">
        <div class="lane gray">
          <i class="bar fx" style="left:0;top:4px;width:72px;height:8px"></i><i class="bar fx" style="left:286px;top:4px;width:70px;height:8px"></i><i class="bar fx" style="left:570px;top:4px;width:36px;height:8px"></i><i class="bar fx" style="left:856px;top:4px;width:72px;height:8px"></i><i class="bar fx" style="left:1140px;top:4px;width:36px;height:8px"></i><i class="bar fx" style="left:1426px;top:4px;width:36px;height:8px"></i><i class="bar fx" style="left:1568px;top:4px;width:36px;height:8px"></i>
          <i class="bar fx" style="left:160px;top:14px;width:126px;height:6px"></i><i class="bar fx" style="left:428px;top:14px;width:124px;height:6px"></i><i class="bar fx" style="left:730px;top:32px;width:126px;height:6px"></i><i class="bar fx" style="left:998px;top:14px;width:126px;height:6px"></i>
          <i class="bar fx" style="left:428px;top:22px;width:124px;height:8px"></i><i class="bar fx" style="left:998px;top:22px;width:126px;height:8px"></i>
          <i class="bar fx" style="left:428px;top:32px;width:124px;height:6px"></i><i class="bar fx" style="left:998px;top:32px;width:126px;height:6px"></i>
          <i class="bar fx" style="left:72px;top:40px;width:70px;height:8px"></i><i class="bar fx" style="left:214px;top:40px;width:72px;height:8px"></i><i class="bar fx" style="left:482px;top:40px;width:70px;height:8px"></i><i class="bar fx" style="left:856px;top:40px;width:72px;height:8px"></i><i class="bar fx" style="left:1052px;top:40px;width:72px;height:8px"></i>
          <i class="bar fx" style="left:550px;top:50px;width:20px;height:6px"></i><i class="bar fx" style="left:1122px;top:50px;width:18px;height:6px"></i>
          <i class="bar fx" style="left:566px;top:58px;width:4px;height:8px"></i><i class="bar fx" style="left:600px;top:58px;width:4px;height:8px"></i><i class="bar fx" style="left:635px;top:58px;width:5px;height:8px"></i><i class="bar fx" style="left:670px;top:58px;width:4px;height:8px"></i><i class="bar fx" style="left:706px;top:58px;width:4px;height:8px"></i><i class="bar fx" style="left:741px;top:58px;width:4px;height:8px"></i><i class="bar fx" style="left:778px;top:58px;width:4px;height:8px"></i><i class="bar fx" style="left:814px;top:58px;width:4px;height:8px"></i><i class="bar fx" style="left:849px;top:58px;width:5px;height:8px"></i>
          <i class="bar fx" style="left:1138px;top:58px;width:4px;height:8px"></i><i class="bar fx" style="left:1170px;top:58px;width:4px;height:8px"></i><i class="bar fx" style="left:1206px;top:58px;width:4px;height:8px"></i><i class="bar fx" style="left:1241px;top:58px;width:5px;height:8px"></i><i class="bar fx" style="left:1277px;top:58px;width:5px;height:8px"></i><i class="bar fx" style="left:1312px;top:58px;width:4px;height:8px"></i><i class="bar fx" style="left:1346px;top:58px;width:4px;height:8px"></i><i class="bar fx" style="left:1382px;top:58px;width:4px;height:8px"></i><i class="bar fx" style="left:1418px;top:58px;width:4px;height:8px"></i><i class="bar fx" style="left:1452px;top:58px;width:6px;height:8px"></i><i class="bar fx" style="left:1488px;top:58px;width:6px;height:8px"></i><i class="bar fx" style="left:1524px;top:58px;width:4px;height:8px"></i><i class="bar fx" style="left:1560px;top:58px;width:4px;height:8px"></i>
        </div>
        <div class="name t-fx"><svg class="ti"><use href="#t-lines"/></svg><span>FX</span></div>
        <div class="mid"><div class="sel">Master</div><div class="box"></div></div>
        <div class="ctl"><div class="num">32</div><div class="s">S</div><div class="vol" style="--v:72%">-5.0</div><div class="c">C</div><div class="meter"></div></div>
      </div>

      <!-- Brass -->
      <div class="track h70">
        <div class="lane blue">
          <div class="clip c-brass" style="left:286px;width:266px"><div class="h"></div><div class="b"><svg class="n"><rect width="100%" height="100%" fill="url(#p-brass)"/></svg></div></div>
          <div class="clip c-brass" style="left:552px;width:70px"><div class="h hatch"></div><div class="b"></div></div>
          <div class="clip c-brass" style="left:857px;width:267px"><div class="h"></div><div class="b"><svg class="n"><rect width="100%" height="100%" fill="url(#p-brass)"/></svg></div></div>
          <div class="clip c-brass" style="left:1124px;width:64px"><div class="h hatch"></div><div class="b"></div></div>
        </div>
        <div class="name t-blue"><svg class="ti"><use href="#t-down"/></svg><span>Brass</span></div>
        <div class="mid"><div class="sel">Master</div><div class="box"></div></div>
        <div class="ctl"><div class="num">40</div><div class="s">S</div><div class="mon"><svg width="20" height="20"><use href="#m-note"/></svg></div><div class="vol" style="--v:26%">-28.6</div><div class="c">C</div><div class="meter"></div></div>
      </div>

      <!-- Vox -->
      <div class="track h68">
        <div class="lane gray">
          <i class="bar vx" style="left:286px;top:4px;width:140px;height:8px"></i><i class="bar vx" style="left:428px;top:4px;width:142px;height:8px"></i><i class="bar vx" style="left:999px;top:4px;width:133px;height:8px"></i>
          <i class="bar vx" style="left:472px;top:14px;width:28px;height:6px"></i><i class="bar vx" style="left:508px;top:14px;width:26px;height:6px"></i>
          <i class="bar vy" style="left:570px;top:22px;width:248px;height:8px"></i><i class="bar vy" style="left:821px;top:22px;width:35px;height:8px"></i><i class="bar vy" style="left:570px;top:32px;width:248px;height:6px"></i><i class="bar vy" style="left:821px;top:32px;width:35px;height:6px"></i>
          <i class="bar vy" style="left:1141px;top:22px;width:143px;height:8px"></i><i class="bar vy" style="left:1286px;top:22px;width:30px;height:8px"></i><i class="bar vy" style="left:1320px;top:22px;width:34px;height:8px"></i><i class="bar vy" style="left:1358px;top:22px;width:30px;height:8px"></i><i class="bar vy" style="left:1390px;top:22px;width:30px;height:8px"></i>
          <i class="bar vy" style="left:1141px;top:32px;width:143px;height:6px"></i><i class="bar vy" style="left:1286px;top:32px;width:30px;height:6px"></i><i class="bar vy" style="left:1320px;top:32px;width:34px;height:6px"></i><i class="bar vy" style="left:1358px;top:32px;width:30px;height:6px"></i><i class="bar vy" style="left:1390px;top:32px;width:30px;height:6px"></i>
          <i class="bar vx" style="left:856px;top:40px;width:44px;height:8px"></i><i class="bar vx" style="left:904px;top:40px;width:22px;height:8px"></i><i class="bar vx" style="left:929px;top:40px;width:69px;height:8px"></i><i class="bar vx" style="left:1420px;top:40px;width:14px;height:8px"></i>
          <i class="bar vx" style="left:360px;top:50px;width:24px;height:6px"></i><i class="bar vx" style="left:410px;top:50px;width:22px;height:6px"></i><i class="bar vx" style="left:476px;top:50px;width:24px;height:6px"></i><i class="bar vx" style="left:508px;top:50px;width:22px;height:6px"></i><i class="bar vx" style="left:552px;top:50px;width:22px;height:6px"></i><i class="bar vy" style="left:838px;top:50px;width:22px;height:6px"></i><i class="bar vy" style="left:980px;top:50px;width:22px;height:6px"></i><i class="bar vx" style="left:1124px;top:50px;width:22px;height:6px"></i><i class="bar vy" style="left:1408px;top:50px;width:22px;height:6px"></i>
        </div>
        <div class="name t-reese"><svg class="ti"><use href="#t-lines"/></svg><span>Vox</span></div>
        <div class="mid grp"><div class="sel">Master</div><div class="box"></div></div>
        <div class="ctl"><div class="num idle">41</div><div class="s">S</div><div class="vol" style="--v:72%">-5.0</div><div class="c">C</div><div class="meter"></div></div>
      </div>

      <!-- Drop area -->
      <div class="track droprow">
        <div class="lane gray"><div class="droptext">Drop Files and Devices Here</div></div>
        <div class="dropfill"></div>
      </div>

      <!-- Returns -->
      <div class="track h34 firstret">
        <div class="lane gray"></div>
        <div class="name t-rev"><svg class="ti"><use href="#t-right"/></svg><span>A Reverb</span></div>
        <div class="mid sm"><div class="box"></div></div>
        <div class="ctl send"><div class="num">A</div><div class="s">S</div><div class="post">Post</div><div class="meter"></div></div>
      </div>
      <div class="track h34">
        <div class="lane gray"></div>
        <div class="name t-del"><svg class="ti"><use href="#t-right"/></svg><span>B Delay</span></div>
        <div class="mid sm"><div class="box"></div></div>
        <div class="ctl send"><div class="num">B</div><div class="s">S</div><div class="post">Post</div><div class="meter"></div></div>
      </div>
      <div class="track h34">
        <div class="lane gray"></div>
        <div class="name t-master"><svg class="ti"><use href="#t-right"/></svg><span>Master</span></div>
        <div class="mid sm"><div class="sel io"><svg width="18" height="18"><path d="M3 7v11M12 7v11M1 3h4M10 3h4M3 1v3M12 1v3" stroke="#111" stroke-width="3"/></svg><span>1/2</span></div></div>
        <div class="ctl mast"><div class="vol cen" style="--v:83%">0</div><div class="vol cen cue" style="--v:83%">0</div><div class="meter"></div></div>
      </div>
    </div>

    <footer class="timeruler">
      <div class="tc">0:00</div><div class="tc">0:20</div><div class="tc">0:40</div><div class="tc">1:00</div><div class="tc">1:20</div><div class="tc">1:40</div><div class="tc">2:00</div><div class="tc">2:20</div><div class="tc">2:40</div>
    </footer>

    <div class="notch">
      <div class="rc"><svg width="24" height="24"><path d="M1 3h22v4H1zM1 12h22v4H1zM1 20h22v4H1z" fill="#f3ae42"/></svg></div>
      <div class="rc"><svg width="22" height="26"><path d="M2 1v24M8 1v24M14 1v24M20 1v24" stroke="#d8d8d8" stroke-width="3"/></svg></div>
    </div>
    <div class="rail"><div class="pill">I·O</div><div class="pill">R</div><div class="pill">M</div><div class="pill dark">D</div></div>
    <div class="ratio">2/1</div>
    <i class="mark top"></i>
    <i class="mark bottom"></i>
  </section>
</main>
</body>
</html>
```

FILE: styles.css
```css
* { box-sizing: border-box; }
html, body { margin: 0; padding: 0; }
body {
  width: 2880px; height: 1720px; overflow: hidden; background: #b0b0b0;
  font-family: Inter, Roboto, "Liberation Sans", sans-serif; font-size: 20px; color: #151515;
}
.defs { position: absolute; width: 0; height: 0; }
i { font-style: normal; }

/* toolbar */
.toolbar { display: flex; gap: 4px; height: 70px; padding: 18px 0 18px 16px; align-items: stretch; }
.tb { display: flex; align-items: center; justify-content: center; background: #e2e2e2; font-size: 19.500px; color: #111; position: relative; white-space: nowrap; }
.dg { font-family: Roboto, sans-serif; font-size: 21px; }
.w86 { width: 86px; } .w52 { width: 52px; } .w84 { width: 84px; } .w34 { width: 34px; }
.w80 { width: 80px; } .w90 { width: 90px; } .w41 { width: 41px; } .w42 { width: 42px; }
.w164 { width: 164px; } .w56 { width: 56px; } .w116 { width: 116px; } .w60 { width: 60px; }
.sp-a { margin-left: 254px; } .sp-b { margin-left: 1px; } .sp-c { margin-left: 42px; } .sp-d { margin-left: 490px; }
.on { background: #f3ae42; }
.drop { justify-content: flex-start; padding-left: 8px; }
.tri-d { position: absolute; right: 6px; top: 14px; width: 0; height: 0; border: 5px solid transparent; border-top: 7px solid #111; border-bottom: 0; }
.num-r { justify-content: flex-end; padding-right: 8px; font-family: Roboto, sans-serif; font-size: 22px; }
.transport { display: flex; align-items: center; gap: 20px; margin: 0 36px 0 36px; }
.split { width: 16px; display: flex; flex-direction: column; gap: 2px; }
.split i { background: #e2e2e2; flex: 1; }
.split.small i:first-child { flex: .8; }
.cpu { justify-content: flex-start; padding-left: 24px; }
.cpu-fill { position: absolute; left: 2px; top: 3px; bottom: 3px; width: 16px; background: #f3ae42; }
.cpuwarn { padding: 4px; }
.cpuwarn span { display: flex; align-items: center; justify-content: center; width: 100%; height: 100%; background: #f1854a; }

/* main */
.main { display: flex; height: 1650px; }
.browser { width: 442px; margin: 0 16px; display: grid; grid-template-columns: 46px 396px; grid-template-rows: 46px 1558px 46px; }
.toggle { width: 38px; height: 38px; border-radius: 50%; background: #8f8f8f; display: flex; align-items: center; justify-content: center; }
.srchwrap { background: #8f8f8f; padding: 8px 8px 0; border-radius: 12px 12px 0 0; }
.search { height: 38px; background: #c4c4c4; padding-left: 14px; line-height: 42px; color: #333; font-size: 19.500px; }
.bbody { grid-column: 1 / 3; display: flex; gap: 4px; background: #8f8f8f; padding: 8px 8px 4px; border-radius: 10px 0 0 10px; }
.col-left { width: 200px; background: #c4c4c4; overflow: hidden; }
.col-right { width: 222px; background: #c4c4c4; overflow: hidden; }
.hd { height: 37px; margin-top: 38px; padding-left: 9px; line-height: 37px; color: #444; font-size: 20px; }
.hd.first { margin-top: 0; height: 36px; line-height: 34px; }
.hd.places { margin-top: 39px; }
.item { height: 38px; display: flex; align-items: center; padding-left: 10px; font-size: 20px; white-space: nowrap; color: #222; }
.item span { margin-left: 8px; }
.bi { width: 30px; height: 28px; flex: none; }
.sel-item { background: #8aa5c0; }
.fav { width: 12px; height: 20px; background: #ee3a2c; margin: 0 13px 0 5px; }
.item .link { text-decoration: underline; text-underline-offset: 3px; }
.namehd { height: 38px; margin-bottom: -2px; background: #aeaeae; padding-left: 6px; line-height: 38px; color: #333; font-size: 20px; position: relative; }
.sort { position: absolute; right: -3px; top: 15px; border: 5px solid transparent; border-bottom: 9px solid #222; border-top: 0; }
.row { height: 38px; display: flex; align-items: center; padding-left: 10px; font-size: 20px; color: #222; white-space: nowrap; position: relative; }
.arr-r { width: 0; height: 0; border: 7px solid transparent; border-left: 12px solid #333; border-right: 0; }
.fo { width: 30px; height: 34px; margin-left: 12px; flex: none; }
.row span { margin-left: 8px; }
.groove { width: 38px; height: 38px; border-radius: 50%; background: #9e9e9e; margin-top: 12px; display: flex; align-items: center; justify-content: center; }
.bbar { background: #8f8f8f; padding: 4px 8px; }
.bbar-in { height: 42px; background: #c4c4c4; padding: 7px 0 0 8px; }

/* arrangement */
.arr { width: 2390px; height: 1650px; background: #767676; border-radius: 12px 0 0 0; position: relative; padding: 8px 0 0 8px; overflow: hidden; }
.ovrow { display: flex; height: 32px; align-items: center; }
.ov { position: relative; width: 2084px; height: 32px; background: #c4c4c4; border: 4px solid #2b2b2b; }
.mb { position: absolute; }
.ovrest { width: 150px; height: 24px; background: #c4c4c4; }
.hw { width: 37px; height: 26px; margin-left: 7px; background: #f3ae42; border: 2px solid #444; display: flex; align-items: center; justify-content: center; font-size: 19px; }
.ruler { display: flex; height: 26px; margin-top: 30px; width: 1732px; position: relative; font-family: Roboto, sans-serif; }
.rb { width: 142.560px; flex: none; position: relative; padding: 2px 0 0 9px; line-height: 24px; font-size: 20px; color: #0a0a0a; }
.rb::before { content: ""; position: absolute; left: 0; top: 14px; bottom: 0; width: 2px; background: #2e2e2e; }
.rb::after { content: ""; position: absolute; left: 71px; bottom: 0; height: 3px; width: 2px; background: #2e2e2e; }

.striprow { display: flex; gap: 4px; height: 64px; }
.stripwrap { width: 1732px; background: #8f8f8f; padding: 2px 0 14px; }
.lane.strip { height: 48px; }
.loc { position: absolute; top: 0; height: 22px; z-index: 3; }
.loc svg { display: block; }
.setctl { padding: 0 0 0 5px; }
.setbtn { width: 58px; height: 25px; margin-top: -1px; border: 2px solid #555; border-radius: 13px; background: #e2e2e2; text-align: center; line-height: 21px; font-size: 18px; }
.setrow { display: flex; margin-top: 4px; gap: 9px; align-items: flex-start; }
.rnd { width: 24px; height: 26px; border-radius: 50%; border: 2px solid #555; background: #e2e2e2; display: flex; align-items: center; justify-content: center; }
.sq { width: 46px; height: 26px; border: 2px solid #555; background: #e2e2e2; display: flex; align-items: center; justify-content: center; margin-left: -1px; }
.sq.first { margin-left: 14px; }

/* tracks */
.tracks { width: 2328px; background: #8f8f8f; display: flex; flex-direction: column; gap: 4px; height: 1460px; }
.track { display: grid; grid-template-columns: 1732px 206px 148px 230px; column-gap: 4px; }
.h70 { height: 70px; } .h68 { height: 68px; } .h34 { height: 34px; }
.droprow { height: 86px; }
.firstret { margin-top: 2px; }
.dropfill { grid-column: 2 / 5; background: #c4c4c4; }

.lane { position: relative; overflow: hidden; --a: #b7b7b7; --z: #c4c4c4;
  background: linear-gradient(90deg, var(--a) 0 50%, var(--z) 50% 100%) 0 0 / 570.600px 100%; }
.lane.blue { --a: #8fa8c9; --z: #98b0d2; }
.lane.light { --a: #d4d4d4; --z: #e2e2e2; }
.lane::after { content: ""; position: absolute; inset: 0; z-index: 2; pointer-events: none;
  background: linear-gradient(90deg, rgba(20,30,50,.17) 0 2px, transparent 2px) 35.660px 0 / 35.660px 100%; }

.droptext { position: absolute; inset: 0; display: flex; align-items: center; justify-content: center; font-size: 19.500px; color: #111; z-index: 3; }

.kick { position: absolute; top: 0; bottom: 0;
  background:
    linear-gradient(#8d5ea5, #8d5ea5) 0 51px / 100% 2px no-repeat,
    repeating-linear-gradient(90deg, transparent 0 3px, rgba(140,95,165,.28) 3px 4px, transparent 4px 7px, rgba(140,95,165,.16) 7px 8px) 0 44px / 100% 16px no-repeat,
    linear-gradient(#8d5ea5, #8d5ea5) 0 68px / 100% 2px no-repeat,
    linear-gradient(#1b1722, #1b1722) 0 35px / 100% 35px no-repeat,
    repeating-linear-gradient(90deg, #d9609e 0 4px, #c5508e 4px 6px) 0 0 / 100% 35px no-repeat; }

.dots { position: absolute; top: 4px; height: 10px;
  background:
    repeating-linear-gradient(90deg, #f1ee80 0 5px, transparent 5px 11px, #f1ee80 11px 13px, transparent 13px 18px) 0 0 / 100% 4px no-repeat,
    repeating-linear-gradient(90deg, #f1ee80 0 5px, transparent 5px 9px, #f1ee80 9px 12px, transparent 12px 18px) 0 6px / 100% 4px no-repeat; }
.bar { position: absolute; }
.dr { background: #eeeb86; }
.drd { background: repeating-linear-gradient(90deg, #eeeb86 0 6px, transparent 6px 18px); }
.or { background: #f3a947; }
.ord { background: repeating-linear-gradient(90deg, #f3a947 0 6px, transparent 6px 11px); }
.fx { background: #d85c9d; }
.vx { background: #97c1fa; }
.vy { background: #8cb6ee; }

.tri { position: absolute; top: 4px; height: 28px;
  background:
    linear-gradient(var(--c), var(--c)) 0 0 / 100% 8px no-repeat,
    linear-gradient(var(--c), var(--c)) 0 10px / 100% 8px no-repeat,
    linear-gradient(var(--c), var(--c)) 0 20px / 100% 8px no-repeat; }
.tri.teal { --c: #4fb3a1; }
.tri.grey { --c: #c4c4c4; }
.tri.grey2 { --c: #ababab; }
.tri.atm { --c: #d4d4d4; }
.tri.atm2 { --c: #cbcbcb; }
.tri.faint { background: linear-gradient(#c0c0c0, #c0c0c0) 0 20px / 100% 8px no-repeat; }

.clip { position: absolute; top: 0; bottom: 0; display: flex; flex-direction: column; overflow: hidden; }
.clip .h { height: 34px; flex: none; background: var(--h); border-bottom: 2px solid var(--hl); }
.clip .b { flex: 1; background: var(--b); min-height: 0; }
.clip .h.hatch { background: repeating-linear-gradient(-45deg, #d6d6d6 0 7px, #9ab5da 7px 14px); border-bottom: 0; }
.n { display: block; width: 100%; height: 100%; }
.c-rev { --h: #57baaa; --hl: #46998c; --b: #50a9c4; }
.c-sub { --h: #6be4fe; --hl: #5cc5dd; --b: #5dbdf0; }
.c-lead { --h: #fbf06c; --hl: #d9cf5e; --b: #bdc66c; }
.c-mid { --h: #96c1fb; --hl: #85abde; --b: #7aaeee; }
.c-arp { --h: #f297a8; --hl: #bc7482; --b: #ad92b9; }
.c-brass { --h: #ac72bd; --hl: #7f5690; --b: #897fce; }

.mc { position: absolute; top: 0; height: 70px; overflow: hidden; color: #1c2633; font-size: 19.500px; border-left: 1px solid rgba(40,60,90,.45); }
.mc b { display: block; font-weight: 400; height: 34px; line-height: 32px; padding-left: 5px; background: #96c1fb; border-bottom: 2px solid #85abde; white-space: nowrap; }
.mc i { display: block; height: 36px; background:
    linear-gradient(90deg, #1f2634 0 16px, transparent 16px) 0 18px / 71.500px 2px repeat-x,
    linear-gradient(90deg, transparent 20px, #1f2634 20px 35px, transparent 35px) 0 23px / 71.500px 2px repeat-x,
    linear-gradient(90deg, transparent 36px, #1f2634 36px 53px, transparent 53px) 0 27px / 71.500px 2px repeat-x,
    linear-gradient(90deg, transparent 53px, #1f2634 53px 70px, transparent 70px) 0 9px / 71.500px 2px repeat-x,
    #7aaeee; }
.mc.off { border: 2px solid #000; color: #0c0c0c; z-index: 3; }
.mc.off b { height: 32px; border-bottom: 2px solid #000; line-height: 30px; padding-left: 5px; background: #96c1fb; }
.mc.off i { height: 34px; background: #7aaeee; line-height: 32px; white-space: nowrap; margin-left: -2px; }
.mc.off.short i { text-indent: -11px; margin-left: 0; }
.mc.off.clear b, .mc.off.clear i { background: transparent; }

/* track header */
.name { display: flex; align-items: flex-start; padding: 5px 0 0 6px; gap: 14px; font-size: 19px; font-weight: 500; line-height: 24px; position: relative; white-space: nowrap; }
.ti { width: 26px; height: 26px; flex: none; margin-top: -1px; }
.nest { padding: 0 0 0 10px; }
.nest::before, .nest::after { content: ""; position: absolute; left: 0; width: 8px; background: var(--g); }
.nest::before { top: -4px; height: 4px; }
.nest::after { top: 0; bottom: 0; }
.inner { flex: 1; align-self: stretch; display: flex; align-items: flex-start; padding: 5px 0 0 7px; gap: 12px; }
.g-lead { --g: #88bfe8; } .g-reese { --g: #98c2fc; }
.t-blue { background: #5a8fdf; color: #132a52; }
.t-yellow { background: #f8f48d; color: #3a3b1c; }
.t-teal { background: #57baaa; color: #123c36; }
.t-lead { background: #88bfe8; color: #1d3852; }
.t-reese { background: #98c2fc; color: #1c3050; }
.t-orange { background: #f3a93f; color: #3a2508; }
.t-atmo { background: #cfcfcf; color: #2c2c2c; }
.t-fx { background: #d65a9c; color: #3a1230; }
.t-rev { background: #f297a8; color: #48252c; }
.t-del { background: #e5752f; color: #3b1a06; }
.t-master { background: #ee4fce; color: #4a0f4e; }
.t-master span { margin-left: 4px; }

.mid { background: #c4c4c4; padding: 7px 4px 0; display: flex; flex-direction: column; gap: 10px; }
.mid.grp { padding-top: 5px; }
.mid.sm { padding-top: 5px; }
.sel, .box { height: 24px; border: 2px solid #3b3b3b; flex: none; }
.sel { background: #fff; position: relative; padding-left: 3px; line-height: 20px; font-size: 20px; color: #000; white-space: nowrap; }
.sel::after { content: ""; position: absolute; right: 3px; top: 4px; border: 7px solid transparent; border-top: 12px solid #000; border-bottom: 0; }
.sel.io { display: flex; align-items: center; gap: 6px; padding-left: 1px; }
.box { background: #c4c4c4; }
.hot .mid, .hot .box, .hot .ctl { background: #e0e0e0; }

.ctl { background: #c4c4c4; padding: 5px 0 0 6px; position: relative; display: grid; grid-template-columns: 91px 10px 41px 5px 46px; grid-auto-rows: 24px; row-gap: 10px; align-content: start; }
.num, .s, .vol, .c, .post { border: 2px solid #444; display: flex; align-items: center; justify-content: center; font-size: 21px; color: #111; font-family: Roboto, sans-serif; }
.num { grid-column: 1; background: #f3ae42; font-weight: 500; }
.num.idle { background: #d0d0d0; }
.s { grid-column: 3; background: #d4d4d4; }
.mon { grid-column: 5; margin: -2px 0; background: #8ba6c8; border: 2px solid #44556b; outline: 2px solid #8ba6c8; outline-offset: -1px; display: flex; align-items: center; justify-content: center; }
.vol { grid-column: 1; background: linear-gradient(90deg, #8fcdfd var(--v), #fff var(--v)); }
.c { grid-column: 3 / 6; background: #fff; }
.meter { position: absolute; right: 6px; top: 3px; bottom: 2px; width: 14px;
  background:
    linear-gradient(90deg, #2a2a2a 0 6px, transparent 6px 8px, #2a2a2a 8px 14px) 0 0 / 100% 5px no-repeat,
    linear-gradient(90deg, #2a2a2a 0 6px, transparent 6px 8px, #2a2a2a 8px 14px) 0 7px / 100% calc(100% - 7px) no-repeat; }
.send { grid-template-columns: 91px 10px 33px 9px 49px; }
.post { grid-column: 5; background: #f3ae42; font-size: 20px; overflow: hidden; }
.mast { grid-template-columns: 91px 10px 91px; }
.vol.cen { grid-column: 1; }
.vol.cue { grid-column: 3; grid-row: 1; background: linear-gradient(90deg, #5d9ff0 var(--v), #fff var(--v)); }

.timeruler { display: flex; height: 30px; width: 1732px; font-family: Roboto, sans-serif; }
.tc { width: 200.800px; flex: none; padding: 4px 0 0 9px; font-size: 20px; line-height: 24px; color: #0a0a0a;
  background: linear-gradient(#333, #333) 50px 0 / 2px 5px no-repeat, linear-gradient(#333, #333) 100px 0 / 2px 5px no-repeat, linear-gradient(#333, #333) 150px 0 / 2px 5px no-repeat, linear-gradient(#333, #333) 0 0 / 2px 16px no-repeat; }

.notch { position: absolute; right: 0; top: 0; width: 46px; height: 92px; background: #b0b0b0; border-bottom-left-radius: 10px; padding-left: 8px; display: flex; flex-direction: column; gap: 8px; }
.rc { width: 38px; height: 38px; border-radius: 50%; background: #767676; display: flex; align-items: center; justify-content: center; }
.rc:last-child { background: #8f8f8f; }
.rail { position: absolute; left: 2350px; top: 1462px; display: flex; flex-direction: column; gap: 12px; }
.pill { width: 26px; height: 26px; border-radius: 50%; background: #f3ae42; color: #b07a24; display: flex; align-items: center; justify-content: center; font-size: 14px; font-weight: 700; }
.pill.dark { background: #444; color: #888; }
.ratio { position: absolute; left: 1678px; top: 1580px; font-size: 36px; color: #7c7c7c; z-index: 4; line-height: 40px; }
.mark { position: absolute; left: 1250px; width: 0; height: 0; border: 7px solid transparent; border-top: 10px solid #5ab4f0; border-bottom: 0; z-index: 4; }
.mark.top { top: 152px; }
.mark.bottom { top: 1618px; transform: scaleY(-1); }
```
